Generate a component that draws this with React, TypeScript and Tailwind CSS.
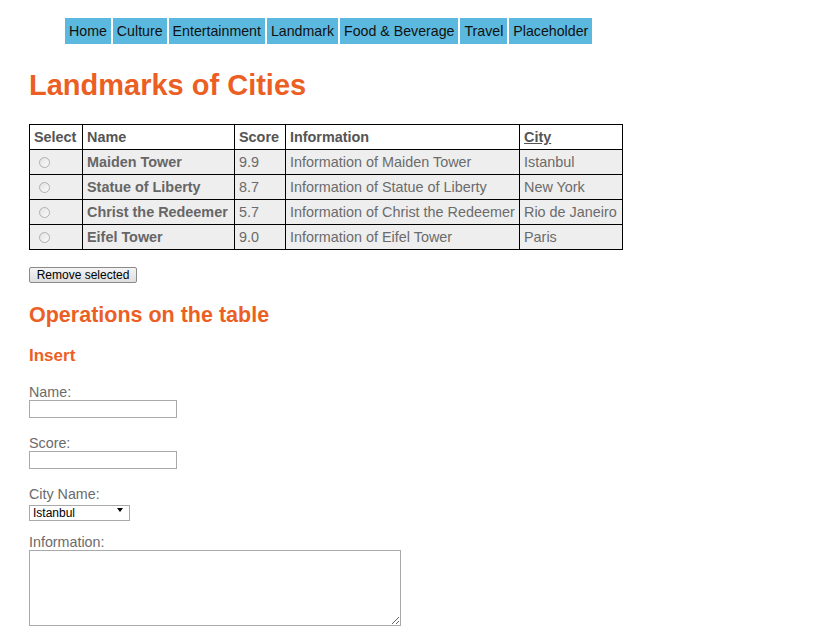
const navItems = ['Home', 'Culture', 'Entertainment', 'Landmark', 'Food & Beverage', 'Travel', 'Placeholder']

const landmarks = [
	{ name: 'Maiden Tower', score: '9.9', city: 'Istanbul' },
	{ name: 'Statue of Liberty', score: '8.7', city: 'New York' },
	{ name: 'Christ the Redeemer', score: '5.7', city: 'Rio de Janeiro' },
	{ name: 'Eifel Tower', score: '9.0', city: 'Paris' },
]

const cell = 'border border-black px-[4px] py-[4px] leading-[16px] text-left'

export default function App() {
	return (
		<div className="min-h-screen bg-white pl-[29px] pt-[18px] pb-[20px] font-['Liberation_Sans',Arial,sans-serif] text-[14.3px] text-[#6b6b6b]">
			<nav className="ml-[36px] flex gap-[2px]">
				{navItems.map((item) => (
					<a key={item} className="h-[26px] bg-[#5bb8de] px-[4px] text-[14.2px] leading-[26px] text-[#111]">
						{item}
					</a>
				))}
			</nav>

			<h1 className="mt-[24px] text-[29px] font-bold leading-[34px] text-[#ec5f24]">Landmarks of Cities</h1>

			<table className="mt-[22px] w-[593px] table-fixed border-collapse text-[14.4px]">
				<thead>
					<tr className="bg-white text-[#555]">
						<th className={`${cell} w-[53px] font-bold`}>Select</th>
						<th className={`${cell} w-[152px] font-bold`}>Name</th>
						<th className={`${cell} w-[51px] font-bold`}>Score</th>
						<th className={`${cell} w-[234px] font-bold`}>Information</th>
						<th className={`${cell} w-[103px] font-bold underline`}>City</th>
					</tr>
				</thead>
				<tbody>
					{landmarks.map((l) => (
						<tr key={l.name} className="bg-[#eeeeee]">
							<td className={cell}>
								<span className="ml-[5px] block h-[11px] w-[11px] rounded-full border border-[#b0b0b0] bg-gradient-to-br from-[#e2e2e2] to-[#fafafa]" />
							</td>
							<td className={`${cell} font-bold text-[#666]`}>{l.name}</td>
							<td className={cell}>{l.score}</td>
							<td className={cell}>Information of {l.name}</td>
							<td className={cell}>{l.city}</td>
						</tr>
					))}
				</tbody>
			</table>

			<button className="mt-[17px] block h-[16px] w-[108px] rounded-[2px] border border-[#8a8a8a] bg-gradient-to-b from-[#f4f4f4] to-[#dedede] text-[12px] leading-[14px] text-black">
				Remove selected
			</button>

			<h2 className="mt-[19px] text-[21.5px] font-bold leading-[26px] text-[#ec5f24]">Operations on the table</h2>
			<h3 className="mt-[18px] text-[17px] font-bold leading-[20px] text-[#ec5f24]">Insert</h3>

			<form className="mt-[18px] flex flex-col">
				<label className="leading-[16px]">Name:</label>
				<input className="h-[18px] w-[148px] border border-[#a9a9a9] bg-white" />

				<label className="mt-[17px] leading-[16px]">Score:</label>
				<input className="h-[18px] w-[148px] border border-[#a9a9a9] bg-white" />

				<label className="mt-[17px] leading-[16px]">City Name:</label>
				<div className="relative h-[16px] w-[101px]">
					<select className="h-[16px] w-[101px] appearance-none border border-[#a9a9a9] bg-white pl-[3px] text-[12px] leading-[14px] text-black">
						<option>Istanbul</option>
						<option>New York</option>
						<option>Rio de Janeiro</option>
						<option>Paris</option>
					</select>
					<svg className="pointer-events-none absolute right-[7px] top-[6px]" width="6" height="4" viewBox="0 0 6 4">
						<path d="M0 0H6L3 4Z" fill="#000" />
					</svg>
				</div>

				<label className="mt-[16px] leading-[16px]">Information:</label>
				<textarea className="h-[76px] w-[372px] border border-[#a9a9a9] bg-white" />
			</form>
		</div>
	)
}
